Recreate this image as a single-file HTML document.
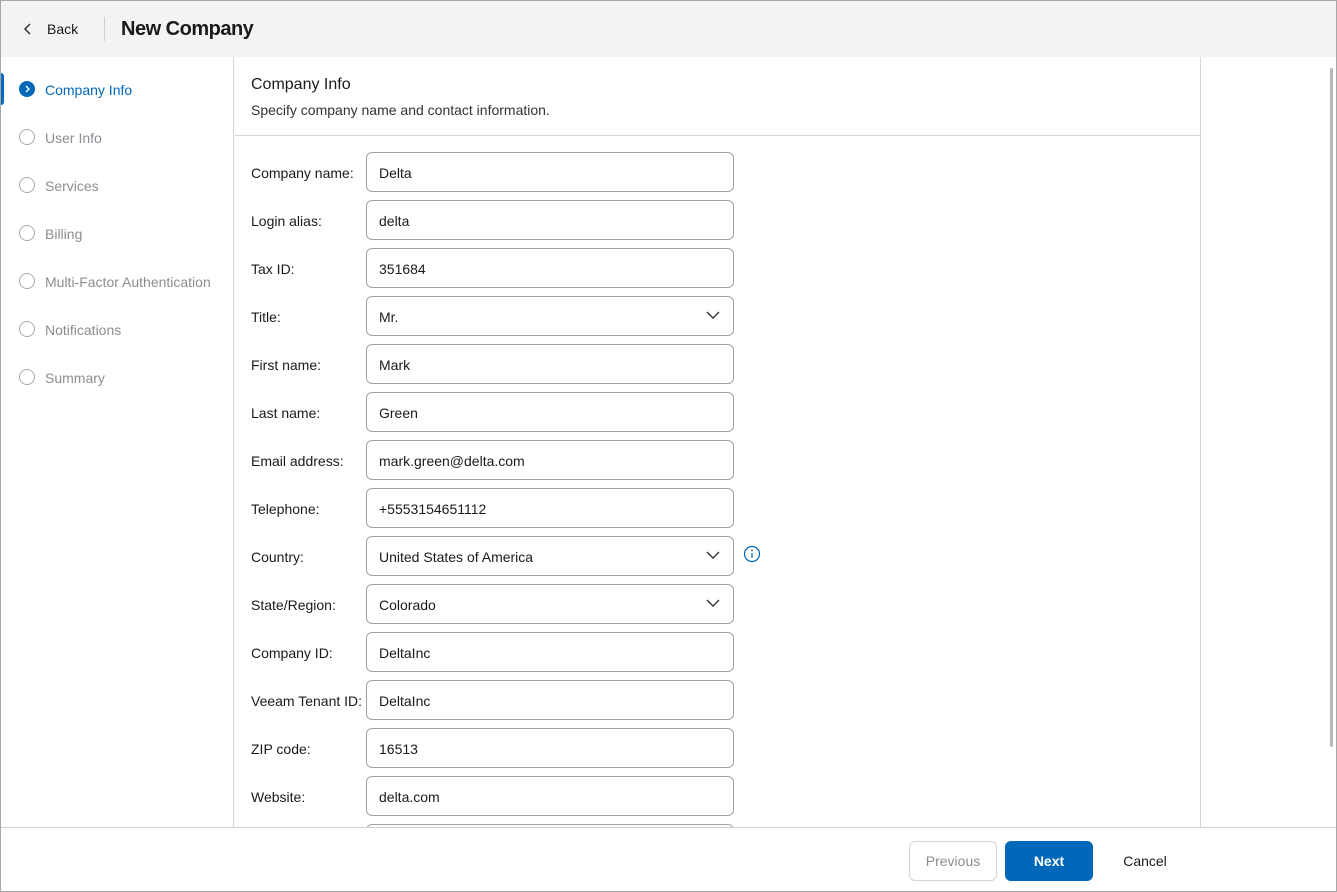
<!DOCTYPE html><html><head><style>
*{box-sizing:border-box;margin:0;padding:0}
body{width:1337px;height:892px;font-family:"Liberation Sans",sans-serif;background:#fff;position:relative;overflow:hidden;color:#1a1a1a}
.frame{position:absolute;inset:0;border:1px solid #a8a8a8;pointer-events:none;z-index:9}
.top{position:absolute;left:0;top:0;width:1337px;height:57px;background:#f2f3f3}
.back{position:absolute;left:47px;top:21px;font-size:14px}
.sep{position:absolute;left:104px;top:17px;width:1px;height:24px;background:#d0d0d0}
.title{position:absolute;left:121px;top:18px;font-size:20px;font-weight:bold;letter-spacing:-0.5px}
.side{position:absolute;left:0;top:57px;width:234px;height:770px;border-right:1px solid #d6d6d6}
.step{position:absolute;left:45px;font-size:14px;color:#8a8d91}
.circ{position:absolute;left:19px;width:16px;height:16px;border:1.5px solid #a8abaf;border-radius:50%}
.main{position:absolute;left:235px;top:57px;width:966px;height:770px;overflow:hidden;border-right:1px solid #d6d6d6}
.h{position:absolute;left:16px;top:19px;font-size:16px}
.sub{position:absolute;left:16px;top:45px;font-size:14px;color:#333}
.hr{position:absolute;left:0;top:78px;width:966px;height:1px;background:#d6d6d6}
.lab{position:absolute;left:16px;font-size:14px}
.in{position:absolute;left:131px;width:368px;height:40px;border:1px solid #a0a3a6;border-radius:6px;font-size:14px;padding:12px 12px 0}
.chev{position:absolute;right:13px;top:13px}
.foot{position:absolute;left:0;top:827px;width:1337px;height:65px;border-top:1px solid #d0d0d0}
.btn{position:absolute;top:13px;height:40px;border-radius:6px;font-size:14px;text-align:center;line-height:40px}
</style></head><body>
<div class="top">
<svg style="position:absolute;left:23px;top:22px" width="10" height="14"><path d="M7 2 L2 7 L7 12" fill="none" stroke="#333" stroke-width="1.5"/></svg>
<div class="back">Back</div><div class="sep"></div><div class="title">New Company</div></div>
<div class="side">
<div style="position:absolute;left:0;top:16px;width:4px;height:32px;background:#0068b8;border-radius:0 3px 3px 0"></div>
<div style="position:absolute;left:19px;top:24px;width:16px;height:16px;border-radius:50%;background:#0068b8"></div>
<svg style="position:absolute;left:19px;top:24px" width="16" height="16"><path d="M7 5 L10 8 L7 11" fill="none" stroke="#fff" stroke-width="1.4"/></svg>
<div class="step" style="top:25px;color:#0068b8">Company Info</div>
<div class="circ" style="top:72px"></div><div class="step" style="top:73px">User Info</div>
<div class="circ" style="top:120px"></div><div class="step" style="top:121px">Services</div>
<div class="circ" style="top:168px"></div><div class="step" style="top:169px">Billing</div>
<div class="circ" style="top:216px"></div><div class="step" style="top:217px">Multi-Factor Authentication</div>
<div class="circ" style="top:264px"></div><div class="step" style="top:265px">Notifications</div>
<div class="circ" style="top:312px"></div><div class="step" style="top:313px">Summary</div>
</div>
<div class="main">
<div class="h">Company Info</div><div class="sub">Specify company name and contact information.</div><div class="hr"></div>
<div class="lab" style="top:108px">Company name:</div><div class="in" style="top:95px">Delta</div>
<div class="lab" style="top:156px">Login alias:</div><div class="in" style="top:143px">delta</div>
<div class="lab" style="top:204px">Tax ID:</div><div class="in" style="top:191px">351684</div>
<div class="lab" style="top:252px">Title:</div><div class="in" style="top:239px">Mr.<svg class="chev" width="14" height="10"><path d="M1 2 L7 8 L13 2" fill="none" stroke="#333" stroke-width="1.4"/></svg></div>
<div class="lab" style="top:300px">First name:</div><div class="in" style="top:287px">Mark</div>
<div class="lab" style="top:348px">Last name:</div><div class="in" style="top:335px">Green</div>
<div class="lab" style="top:396px">Email address:</div><div class="in" style="top:383px">mark.green@delta.com</div>
<div class="lab" style="top:444px">Telephone:</div><div class="in" style="top:431px">+5553154651112</div>
<div class="lab" style="top:492px">Country:</div><div class="in" style="top:479px">United States of America<svg class="chev" width="14" height="10"><path d="M1 2 L7 8 L13 2" fill="none" stroke="#333" stroke-width="1.4"/></svg></div>
<svg style="position:absolute;left:508px;top:488px" width="18" height="18"><circle cx="9" cy="9" r="7.5" fill="none" stroke="#0068b8" stroke-width="1.2"/><circle cx="9" cy="5.5" r="0.9" fill="#0068b8"/><path d="M9 8 V13" stroke="#0068b8" stroke-width="1.3"/></svg>
<div class="lab" style="top:540px">State/Region:</div><div class="in" style="top:527px">Colorado<svg class="chev" width="14" height="10"><path d="M1 2 L7 8 L13 2" fill="none" stroke="#333" stroke-width="1.4"/></svg></div>
<div class="lab" style="top:588px">Company ID:</div><div class="in" style="top:575px">DeltaInc</div>
<div class="lab" style="top:636px">Veeam Tenant ID:</div><div class="in" style="top:623px">DeltaInc</div>
<div class="lab" style="top:684px">ZIP code:</div><div class="in" style="top:671px">16513</div>
<div class="lab" style="top:732px">Website:</div><div class="in" style="top:719px">delta.com</div>
<div class="in" style="top:767px"></div>
</div>
<div style="position:absolute;left:1330px;top:68px;width:3px;height:679px;background:#b8b8b8;border-radius:2px"></div>
<div class="foot">
<div class="btn" style="left:909px;width:88px;border:1px solid #d4d4d4;color:#8a8d91;line-height:38px">Previous</div>
<div class="btn" style="left:1005px;width:88px;background:#0068b8;color:#fff;font-weight:bold">Next</div>
<div class="btn" style="left:1105px;width:80px;color:#1a1a1a">Cancel</div>
</div>
<div class="frame"></div>
</body></html>
